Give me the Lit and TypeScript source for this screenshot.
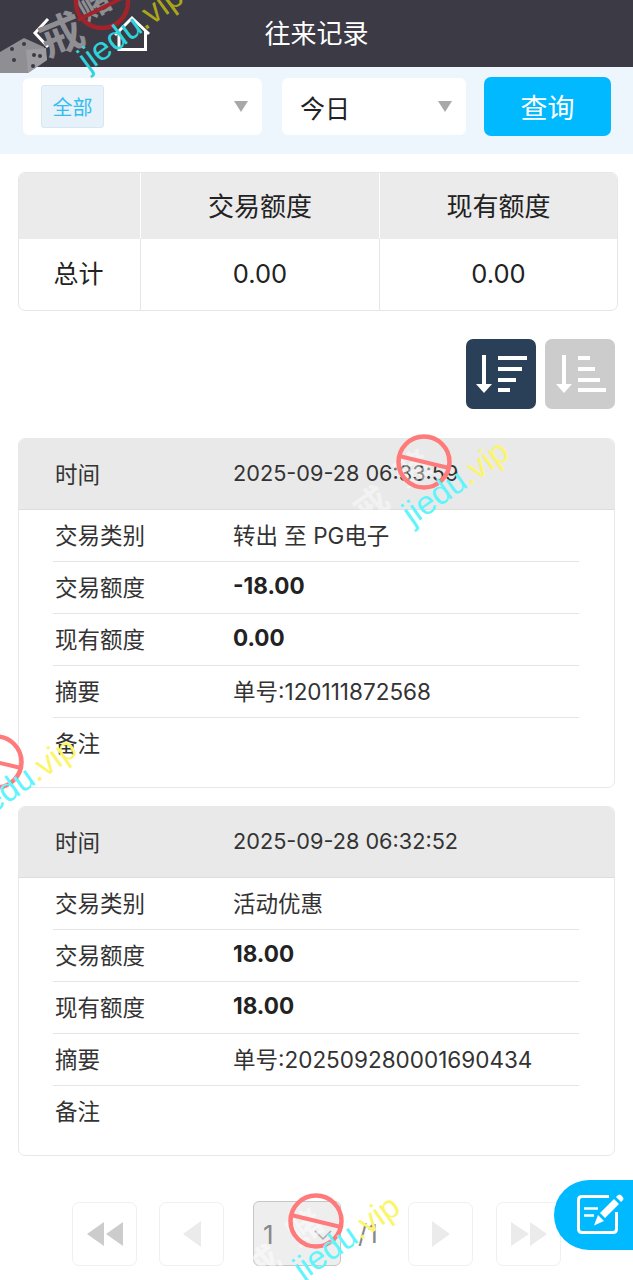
import { LitElement, html, css, svg } from "lit";
import { customElement } from "lit/decorators.js";

interface Rec { time: string; type: string; amount: string; balance: string; memo: string }

const RECORDS: Rec[] = [
  { time: "2025-09-28 06:33:59", type: "转出 至 PG电子", amount: "-18.00", balance: "0.00", memo: "单号:120111872568" },
  { time: "2025-09-28 06:32:52", type: "活动优惠", amount: "18.00", balance: "18.00", memo: "单号:202509280001690434" },
];

@customElement("app-root")
export class AppRoot extends LitElement {
  static styles = css`
    :host {
      display: block;
      position: relative;
      width: 633px;
      height: 1280px;
      overflow: hidden;
      background: #fff;
      font-family: "Inter", "Noto Sans CJK SC", sans-serif;
      color: #333;
    }
    .header {
      height: 67px;
      background: #3b3a45;
      display: flex;
      align-items: center;
      justify-content: center;
      position: relative;
      color: #fff;
      font-size: 26px;
      padding-bottom: 4px;
      box-sizing: border-box;
    }
    .nav-icons {
      position: absolute;
      left: 0;
      top: 0;
    }
    .filters {
      height: 87px;
      background: #eef6fd;
      box-sizing: border-box;
      padding: 10px 22px 0 23px;
      display: flex;
      align-items: flex-start;
    }
    .select {
      height: 57px;
      margin-top: 1px;
      background: #fff;
      border-radius: 6px;
      display: flex;
      align-items: center;
      box-sizing: border-box;
    }
    .select.all { width: 239px; padding: 0 14px 0 18px; margin-right: 20px; }
    .select.day { width: 184px; padding: 0 14px 0 18px; margin-right: 18px; font-size: 25px; color: #222; }
    .tag {
      width: 63px;
      height: 43px;
      box-sizing: border-box;
      background: #e6f1fa;
      border: 1px solid #d8e7f4;
      border-radius: 3px;
      color: #35bdf0;
      font-size: 20px;
      display: flex;
      align-items: center;
      justify-content: center;
    }
    .caret {
      margin-left: auto;
      width: 0;
      height: 0;
      border-left: 7px solid transparent;
      border-right: 7px solid transparent;
      border-top: 11px solid #a8a8a8;
    }
    .query {
      width: 127px;
      height: 59px;
      background: #00b9ff;
      border-radius: 7px;
      color: #fff;
      font-size: 27px;
      display: flex;
      align-items: center;
      justify-content: center;
    }
    .summary {
      margin: 18px 15px 0 18px;
      height: 139px;
      border: 1px solid #e6e6e6;
      border-radius: 7px;
      overflow: hidden;
      display: grid;
      grid-template-columns: 121px 239px 1fr;
      grid-template-rows: 66px 1fr;
      box-sizing: border-box;
      color: #222;
      font-size: 26px;
    }
    .summary > div {
      display: flex;
      align-items: center;
      justify-content: center;
      border-left: 1px solid #e6e6e6;
      padding-bottom: 3px;
    }
    .summary > div:nth-child(3n + 1) { border-left: none; }
    .summary .th { background: #ebebeb; border-left-color: #fff; }
    .summary .label { font-size: 25px; padding-bottom: 6px; padding-right: 2px; }
    .summary .num { font-size: 25.5px; }
    .sort {
      display: flex;
      justify-content: flex-end;
      gap: 9px;
      margin: 28px 18px 0 0;
    }
    .sort-btn {
      width: 70px;
      height: 70px;
      border-radius: 7px;
      display: flex;
    }
    .sort-btn.on { background: #2a4058; }
    .sort-btn.off { background: #cccccc; }
    .cards {
      margin: 29px 18px 0 18px;
      display: flex;
      flex-direction: column;
      gap: 18px;
    }
    .card {
      height: 350px;
      box-sizing: border-box;
      border: 1px solid #e8e8e8;
      border-radius: 7px;
      overflow: hidden;
      font-size: 22.5px;
    }
    .card-head {
      height: 71px;
      background: #e9e9e9;
      display: grid;
      grid-template-columns: 178px 1fr;
      padding-left: 36px;
      align-items: center;
      border-bottom: 1px solid #ddd;
      box-sizing: border-box;
      padding-bottom: 2px;
    }
    .time { font-size: 21.7px; }
    .rows { margin: 0 35px 0 34px; }
    .row {
      height: 52px;
      display: grid;
      grid-template-columns: 178px 1fr;
      padding-left: 2px;
      align-items: center;
      border-bottom: 1px solid #e4e4e4;
      box-sizing: border-box;
      padding-bottom: 4px;
    }
    .row:last-child { border-bottom: none; }
    .row b { font-weight: 700; color: #222; }
    .pager {
      margin: 45px 0 0 72px;
      display: flex;
      align-items: center;
      color: #888;
      font-size: 26px;
    }
    .pg {
      width: 65px;
      height: 64px;
      box-sizing: border-box;
      border: 1px solid #f0f0f0;
      border-radius: 7px;
      display: flex;
      align-items: center;
      justify-content: center;
    }
    .pg-sel {
      width: 88px;
      height: 65px;
      box-sizing: border-box;
      background: #eeeeee;
      border: 1px solid #c6c6c6;
      border-radius: 6px;
      display: flex;
      align-items: center;
      justify-content: space-between;
      padding: 2px 6px 0 9px;
      margin: 0 17px 0 29px;
    }
    .of { width: 50px; }
    .fab {
      position: absolute;
      left: 554px;
      top: 1180px;
      width: 79px;
      height: 70px;
      background: #00b9ff;
      border-radius: 35px 0 0 35px;
    }
    .overlay {
      position: absolute;
      left: 0;
      top: 0;
      pointer-events: none;
    }
    .wm-url { font-family: "Liberation Sans", sans-serif; font-size: 33px; }
    .wm-cn { font-family: "Noto Sans CJK SC", sans-serif; font-weight: 700; }
  `;

  private sortIcon(desc: boolean) {
    const widths = desc ? [29, 24, 18, 12] : [12, 17, 22, 28];
    const x = desc ? 32 : 33;
    const shaft = desc ? 16 : 17;
    const ys = [17, 28, 39, 49];
    return html`<svg width="70" height="70" viewBox="0 0 70 70">
      <rect x=${shaft} y="16" width="4" height="30" fill="#fff"></rect>
      <path d="M${shaft - 6} 45H${shaft + 10}L${shaft + 2} 54Z" fill="#fff"></path>
      ${widths.map((w, i) => svg`<rect x=${x} y=${ys[i]} width=${w} height="4" fill="#fff"></rect>`)}
    </svg>`;
  }

  private card(r: Rec) {
    return html`<div class="card">
      <div class="card-head"><span>时间</span><span class="time">${r.time}</span></div>
      <div class="rows">
        <div class="row"><span>交易类别</span><span>${r.type}</span></div>
        <div class="row"><span>交易额度</span><b>${r.amount}</b></div>
        <div class="row"><span>现有额度</span><b>${r.balance}</b></div>
        <div class="row"><span>摘要</span><span>${r.memo}</span></div>
        <div class="row"><span>备注</span><span></span></div>
      </div>
    </div>`;
  }

  private mark(cx: number, cy: number, tx: number, ty: number, faint: string) {
    return svg`
      <g fill=${faint} class="wm-cn" font-size="34">
        <text transform="translate(${cx - 60} ${cy + 62}) rotate(-35)">戒</text>
        <text transform="translate(${cx - 18} ${cy + 26}) rotate(-35)">赌</text>
      </g>
      <circle cx=${cx} cy=${cy} r="25.5" fill="none" stroke="#ff7b7b" stroke-width="4.5"></circle>
      <line x1=${cx - 25} y1=${cy - 6} x2=${cx + 25} y2=${cy + 6} stroke="#ff7b7b" stroke-width="4"></line>
      <text class="wm-url" transform="translate(${tx} ${ty}) rotate(-35)"><tspan fill="#5ff5fb">jiedu</tspan><tspan fill="#fbf56b">.vip</tspan></text>
    `;
  }

  render() {
    return html`
      <div class="header">
        <svg class="nav-icons" width="160" height="67" viewBox="0 0 160 67" fill="none" stroke="#fff" stroke-width="3">
          <path d="M48 19L35 33L48 47"></path>
          <path d="M115 35L132 18L149 34M119 31V49.5H145.5V31"></path>
        </svg>
        往来记录
      </div>
      <div class="filters">
        <div class="select all"><span class="tag">全部</span><i class="caret"></i></div>
        <div class="select day"><span>今日</span><i class="caret"></i></div>
        <div class="query">查询</div>
      </div>
      <div class="summary">
        <div class="th"></div><div class="th">交易额度</div><div class="th">现有额度</div>
        <div class="label">总计</div><div class="num">0.00</div><div class="num">0.00</div>
      </div>
      <div class="sort">
        <div class="sort-btn on">${this.sortIcon(true)}</div>
        <div class="sort-btn off">${this.sortIcon(false)}</div>
      </div>
      <div class="cards">${RECORDS.map((r) => this.card(r))}</div>
      <div class="pager">
        <div class="pg">
          <svg width="38" height="26" viewBox="0 0 38 26"><path d="M1 13L18 1V25ZM20 13L37 1V25Z" fill="#cccccc"></path></svg>
        </div>
        <div class="pg" style="margin-left:22px">
          <svg width="18" height="26" viewBox="0 0 18 26"><path d="M0 13L18 0V26Z" fill="#ebebeb"></path></svg>
        </div>
        <div class="pg-sel">
          <span>1</span>
          <svg width="22" height="12" viewBox="0 0 22 12" fill="none" stroke="#aaa" stroke-width="1.5"><path d="M3 2L11 10L19 2"></path></svg>
        </div>
        <div class="of">/1</div>
        <div class="pg">
          <svg width="18" height="26" viewBox="0 0 18 26"><path d="M18 13L0 0V26Z" fill="#ebebeb"></path></svg>
        </div>
        <div class="pg" style="margin-left:23px">
          <svg width="38" height="26" viewBox="0 0 38 26"><path d="M19 13L1 1V25ZM37 13L20 1V25Z" fill="#ebebeb"></path></svg>
        </div>
      </div>
      <div class="fab">
        <svg width="79" height="70" viewBox="0 0 79 70" fill="none">
          <path d="M55 16.5H28Q24.5 16.5 24.5 20V49Q24.5 52.5 28 52.5H59Q62.5 52.5 62.5 49V32" stroke="#fff" stroke-width="3"></path>
          <path d="M30 28.5H44M30 35.5H40" stroke="#fff" stroke-width="2.5"></path>
          <path d="M46 33L60 19L65 24L51 38Z" fill="#fff"></path>
          <path d="M62 17L64 15Q65.5 14 67 15L69 17.5Q70 19 69 20L67 22Z" fill="#fff"></path>
          <path d="M40 45.5L44 35L50 41Z" fill="#fff"></path>
        </svg>
      </div>
      <svg class="overlay" width="633" height="1280" viewBox="0 0 633 1280">
        <g>
          <path d="M0 52L24 38L44 47L47 60L28 73H0Z" fill="#8e8e93"></path>
          <path d="M26 50L46 48L47 60L28 73Z" fill="#9c9ca1"></path>
          <g fill="#3b3a45">
            <circle cx="12" cy="49" r="2"></circle><circle cx="24" cy="44" r="2"></circle>
            <circle cx="14" cy="60" r="2"></circle><circle cx="34" cy="55" r="2"></circle>
            <circle cx="40" cy="56" r="2"></circle><circle cx="33" cy="66" r="2"></circle>
          </g>
          <text class="wm-cn" font-size="44" fill="#8e8e93" transform="translate(47 58) rotate(-22)">戒</text>
        </g>
        <g>
          <text class="wm-cn" font-size="32" fill="#8e8e93" transform="translate(86 22) rotate(-30)">赌</text>
          <circle cx="102" cy="2" r="26" fill="none" stroke="#a3232b" stroke-width="4.5"></circle>
          <line x1="78" y1="20" x2="128" y2="-5" stroke="#a3232b" stroke-width="4"></line>
          <text class="wm-url" transform="translate(88 72) rotate(-36)"><tspan fill="#2ed3dc">jiedu</tspan><tspan fill="#a9a61a">.vip</tspan></text>
        </g>
        ${this.mark(424, 462, 412, 526, "rgba(255,255,255,.45)")}
        ${this.mark(-4, 762, -20, 823, "rgba(255,255,255,0)")}
        ${this.mark(316, 1221, 303, 1281, "rgba(255,255,255,.5)")}
      </svg>
    `;
  }
}
